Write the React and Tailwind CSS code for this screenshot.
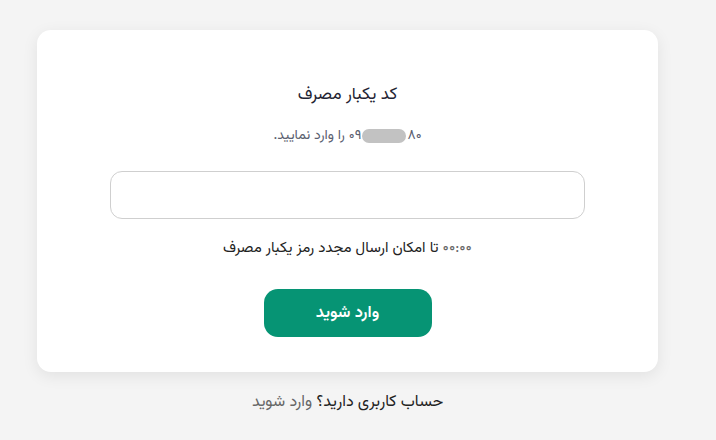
import React from "react";

export default function App() {
  const font = { fontFamily: '"Vazirmatn", "Noto Sans Arabic", "DejaVu Sans", sans-serif' };
  return (
    <div dir="rtl" style={font} className="min-h-[440px] w-[716px] bg-[#f4f4f4] pr-[21px] pt-[30px]">
      <div className="flex flex-col items-center">
        <div className="flex w-[621px] flex-col items-center rounded-[14px] bg-white pt-[55px] pb-[35px] shadow-[0_4px_16px_rgba(0,0,0,0.08)]">
          <h1 className="text-[17px] leading-5 font-normal text-[#1f2433]">کد یکبار مصرف</h1>
          <p className="mt-[23px] flex h-4 items-center text-[14px] leading-4 text-[#5b6070]">
            <span dir="ltr" className="inline-flex items-center">
              <span>۰۹</span>
              <span className="mx-[1px] inline-block h-[14px] w-[44px] rounded-full bg-[#c2c2c2]"></span>
              <span>۸۰</span>
            </span>
            <span className="mr-1">را وارد نمایید.</span>
          </p>
          <input
            type="text"
            className="mt-[27px] h-[48px] w-[475px] rounded-[12px] border border-[#cfcfcf] bg-white px-3 outline-none"
          />
          <p className="mt-[20px] text-[15px] leading-5 text-[#222]">
            <span className="text-[#666]">۰۰:۰۰</span> تا امکان ارسال مجدد رمز یکبار مصرف
          </p>
          <button className="mt-[30px] h-[48px] w-[168px] rounded-[14px] bg-[#069474] text-[16.5px] font-semibold text-white">
            وارد شوید
          </button>
        </div>
        <p className="mt-[21px] text-[16px] leading-5 text-[#222]">
          حساب کاربری دارید؟ <span className="text-[#666]">وارد شوید</span>
        </p>
      </div>
    </div>
  );
}
